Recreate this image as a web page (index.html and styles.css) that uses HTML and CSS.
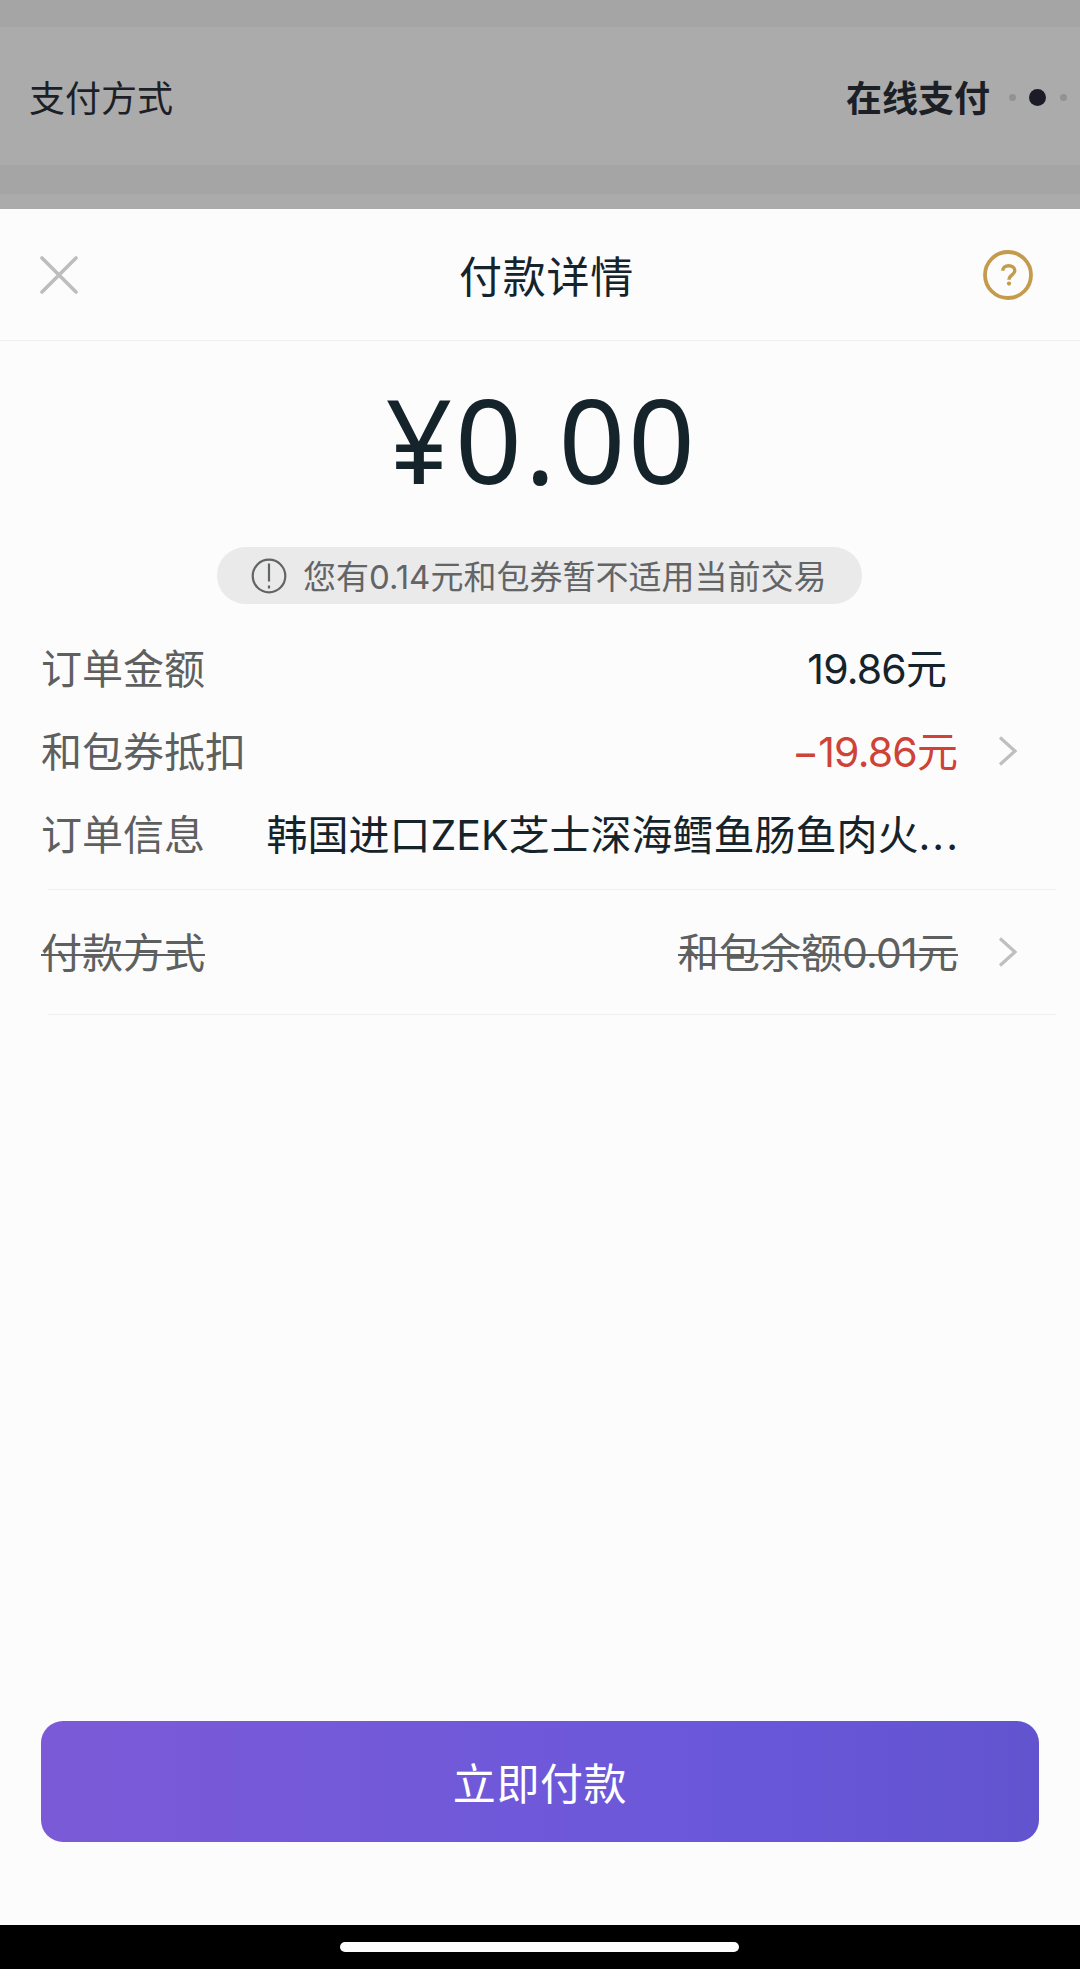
FILE: index.html
```html
<!DOCTYPE html>
<html lang="zh-CN">
<head>
  <meta charset="UTF-8" />
  <meta name="viewport" content="width=device-width, initial-scale=1.0"/>
  <title>付款详情</title>
  <link rel="stylesheet" href="styles.css">
</head>
<body>

<div class="backdrop">
  <div class="backdrop-row">
    <span>支付方式</span>
    <div class="backdrop-value">
      <strong>在线支付</strong>
      <div class="dots">
        <i class="dot"></i>
        <i class="dot dot-active"></i>
        <i class="dot"></i>
      </div>
    </div>
  </div>
  <div class="backdrop-next"></div>
</div>

<main class="sheet">
  <header class="sheet-header">
    <svg class="close" viewBox="0 0 38 38">
      <path d="M2 2L36 36M36 2L2 36"/>
    </svg>
    <h1>付款详情</h1>
    <svg class="help" viewBox="0 0 50 50">
      <circle cx="25" cy="25" r="23"/>
      <path d="M19.8 20.8C19.8 17.6 22.2 15.8 25.6 15.8C29.2 15.8 31.8 17.8 31.8 20.8C31.8 24.8 26 25 26 29.8"/>
      <circle class="help-dot" cx="26" cy="33.6" r="2.1"/>
    </svg>
  </header>

  <div class="amount">¥0.00</div>

  <div class="notice">
    <svg viewBox="0 0 36 36">
      <circle cx="18" cy="18" r="16.3"/>
      <path d="M18 5.5V23.5M18 27.6V30.6"/>
    </svg>
    <span>您有0.14元和包券暂不适用当前交易</span>
  </div>

  <section class="details">
    <div class="row row-plain">
      <span class="label">订单金额</span>
      <span class="value"><span class="num">19.86</span>元</span>
    </div>
    <div class="row">
      <span class="label">和包券抵扣</span>
      <span class="value discount"><span class="num">−19.86</span>元</span>
      <svg class="arrow" viewBox="0 0 20 32"><path d="M2 2.5L17 16L2 29.5"/></svg>
    </div>
    <div class="row row-info">
      <span class="label">订单信息</span>
      <span class="value">韩国进口ZEK芝士深海鳕鱼肠鱼肉火<span class="more">...</span></span>
    </div>
  </section>

  <section class="method">
    <div class="row">
      <span class="label"><s>付款方式</s></span>
      <span class="value"><s>和包余额<span class="num">0.01</span>元</s></span>
      <svg class="arrow" viewBox="0 0 20 32"><path d="M2 2.5L17 16L2 29.5"/></svg>
    </div>
  </section>

  <button class="pay">立即付款</button>
</main>

<footer class="home-bar"><div class="home-indicator"></div></footer>

</body>
</html>
```
FILE: styles.css
```css
* {
  box-sizing: border-box;
}
body {
  margin: 0;
  height: 1969px;
  display: flex;
  flex-direction: column;
  font-family: Inter, "Noto Sans CJK SC", sans-serif;
  background: #fcfcfc;
  color: #15232b;
}
svg {
  display: block;
  flex: none;
  fill: none;
}

/* dimmed page behind the sheet */
.backdrop {
  height: 209px;
  padding-top: 27px;
  background: #a5a5a5;
}
.backdrop-row {
  display: flex;
  justify-content: space-between;
  align-items: center;
  height: 138px;
  padding: 6px 13px 0 29px;
  background: #ababab;
  color: #1c1f26;
  font-size: 36px;
  line-height: 52px;
}
.backdrop-value {
  display: flex;
  align-items: center;
}
.dots {
  display: flex;
  align-items: center;
  gap: 13px;
  margin: -4px 0 0 19px;
}
.dot {
  width: 7px;
  height: 7px;
  border-radius: 50%;
  background: #929292;
}
.dot-active {
  width: 17px;
  height: 17px;
  margin-right: 1px;
  background: #1c1c28;
}
.backdrop-next {
  height: 15px;
  margin-top: 29px;
  background: #ababab;
}

.sheet {
  flex: 1;
  display: flex;
  flex-direction: column;
}
.sheet-header {
  display: flex;
  justify-content: space-between;
  align-items: center;
  height: 132px;
  padding: 0 47px 0 40px;
  border-bottom: 1px solid #eeeff0;
}
.sheet-header h1 {
  margin: 4px 0 0 32px;
  font-size: 43px;
  line-height: 60px;
  font-weight: 400;
  letter-spacing: 0.8px;
}
.close {
  width: 38px;
  height: 38px;
  stroke: #bdbdbd;
  stroke-width: 3.6;
  stroke-linecap: round;
}
.help {
  width: 50px;
  height: 50px;
  stroke: #c49a4c;
  stroke-width: 3.8;
}
.help path {
  stroke-width: 3.4;
}
.help .help-dot {
  fill: #c49a4c;
  stroke: none;
}

.amount {
  height: 206px;
  padding: 30px 0 0 3px;
  text-align: center;
  font-family: "Noto Sans", sans-serif;
  font-size: 117px;
  line-height: 136px;
  letter-spacing: 2.6px;
}
.notice {
  align-self: center;
  display: flex;
  align-items: center;
  width: 645px;
  height: 57px;
  margin-right: 1px;
  padding-left: 34px;
  border-radius: 29px;
  background: #eaeaea;
  color: #626466;
  font-size: 33px;
  line-height: 48px;
  white-space: nowrap;
}
.notice span {
  padding-top: 2px;
}
.notice svg {
  width: 36px;
  height: 36px;
  margin-right: 16px;
  stroke: #626466;
  stroke-width: 2.2;
}

.details {
  margin: 0 24px 0 48px;
  height: 286px;
  padding-top: 23px;
  border-bottom: 1px solid #eeefef;
}
.method {
  margin: 0 24px 0 48px;
  height: 125px;
  padding-top: 21px;
  border-bottom: 1px solid #eeefef;
}
.row {
  display: flex;
  align-items: center;
  height: 83px;
  margin-left: -7px;
  padding-right: 98px;
  font-size: 41px;
  line-height: 60px;
  white-space: nowrap;
}
.row-plain {
  padding-right: 109px;
}
.row-info {
  padding-right: 96px;
}
.label {
  color: #5e6060;
}
.value {
  margin-left: auto;
}
.discount {
  color: #cf4238;
}
.num {
  letter-spacing: -0.8px;
}
.more {
  letter-spacing: 2px;
}
.method .value {
  color: #5e6060;
}
s {
  text-decoration-thickness: 2px;
}
.arrow {
  width: 20px;
  height: 32px;
  margin: -2px -60px 0 40px;
  stroke: #bfbfbf;
  stroke-width: 3.2;
}

.pay {
  height: 121px;
  margin: auto 41px 83px;
  padding: 0 0 2px;
  border: none;
  border-radius: 22px;
  background: linear-gradient(90deg, #7c5ad7, #7059d9 45%, #6957da 70%, #6254cf);
  color: #fff;
  font: inherit;
  font-size: 43px;
  letter-spacing: 0.6px;
}

.home-bar {
  height: 44px;
  padding-top: 17px;
  background: #000;
}
.home-indicator {
  width: 399px;
  height: 10px;
  margin: 0 0 0 340px;
  border-radius: 5px;
  background: #fdfdfd;
}
```
